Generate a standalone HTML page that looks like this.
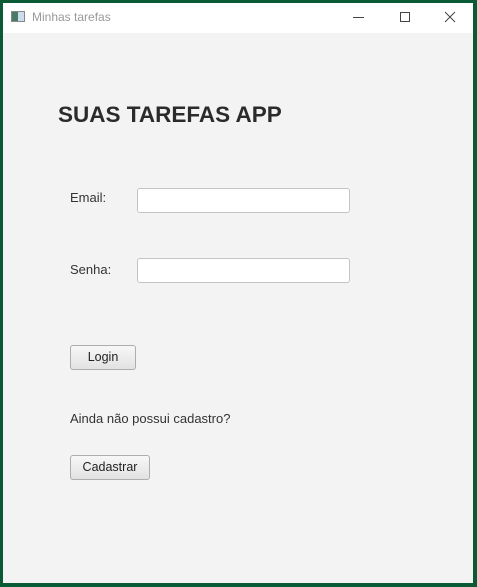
<!DOCTYPE html>
<html><head><style>
body{margin:0;width:477px;height:587px;background:#0b5a36;position:relative;overflow:hidden;font-family:"Liberation Sans",sans-serif;}
.win{position:absolute;left:3px;top:3px;width:470px;height:580px;background:#f3f3f3;}
.tb{position:absolute;left:0;top:0;width:470px;height:30px;background:#fff;}
.a{position:absolute;}
.in{position:absolute;background:#fff;border:1px solid #c4c4c4;border-radius:3px;box-sizing:border-box;}
.btn{position:absolute;box-sizing:border-box;border:1px solid #adadad;border-radius:3px;background:linear-gradient(#f7f7f7,#e2e2e2);font-size:12.5px;color:#222;text-align:center;line-height:23px;}
.lbl{font-size:13px;color:#333;}
</style></head><body>
<div class="win">
<div class="tb">
<div class="a" style="left:8px;top:8px;width:14px;height:11px;border:1px solid #888;box-sizing:border-box;background:linear-gradient(90deg,#4a7a6a 50%,#cde 50%)"></div>
<div class="a" style="left:29px;top:7px;font-size:12px;color:#999">Minhas tarefas</div>
<div class="a" style="left:350px;top:14px;width:11px;height:1px;background:#444"></div>
<div class="a" style="left:397px;top:9px;width:10px;height:10px;border:1px solid #444;box-sizing:border-box"></div>
<svg class="a" style="left:441px;top:8px" width="12" height="12"><path d="M1 1L11 11M11 1L1 11" stroke="#444" stroke-width="1"/></svg>
</div>
<div class="a" style="left:55px;top:99px;font-size:22.5px;font-weight:bold;color:#2b2b2b">SUAS TAREFAS APP</div>
<div class="a lbl" style="left:67px;top:187px">Email:</div>
<div class="in" style="left:134px;top:185px;width:213px;height:25px"></div>
<div class="a lbl" style="left:67px;top:259px">Senha:</div>
<div class="in" style="left:134px;top:255px;width:213px;height:25px"></div>
<div class="btn" style="left:67px;top:342px;width:66px;height:25px">Login</div>
<div class="a lbl" style="left:67px;top:408px">Ainda não possui cadastro?</div>
<div class="btn" style="left:67px;top:452px;width:80px;height:25px">Cadastrar</div>
</div>
</body></html>
